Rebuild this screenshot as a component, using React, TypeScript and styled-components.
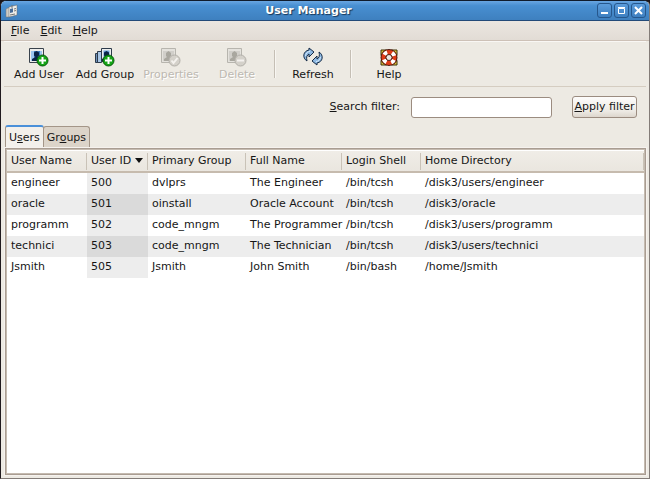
import React from "react";
import styled, { createGlobalStyle, css } from "styled-components";

const GlobalStyle = createGlobalStyle`
  * { box-sizing: border-box; }
  body { margin: 0; background: #1b1517; }
  body, button, input, table { font: 11px/14px "DejaVu Sans", sans-serif; color: #161616; }
  button { cursor: default; }
`;

const Window = styled.main`
  min-height: 100vh;
  display: flex;
  flex-direction: column;
  background: #edeae3;
  border: 1px solid #837c78;
  border-top-color: #101c2c;
  border-left-color: #201a1e;
  border-radius: 6px 6px 0 0;
  overflow: hidden;
`;

const TitleBar = styled.header`
  height: 20px;
  display: grid;
  grid-template-columns: 20px 1fr 54px;
  align-items: center;
  padding: 0 3px 0 4px;
  background: linear-gradient(#69a6e2, #488fd1 25%, #3e80bf);
  border-bottom: 1px solid #234a78;
`;

const Title = styled.h1`
  margin: 0;
  text-align: center;
  color: #fff;
  font-size: 11px;
  line-height: 18px;
  text-shadow: 1px 1px 1px #173655;
`;

const WindowButtons = styled.div`
  display: flex;
  gap: 2px;
  justify-content: flex-end;
`;

const WindowButton = styled.button`
  width: 15px;
  height: 15px;
  padding: 0;
  display: flex;
  border: 1px solid #26578c;
  border-radius: 3px;
  background: linear-gradient(#5b9cdb, #3d7fc0);
`;

const MenuBar = styled.nav`
  height: 20px;
  display: flex;
  align-items: center;
  padding: 0 6px;
  background: linear-gradient(#ebe6e0, #e2dcd5);
  border-bottom: 1px solid #cdc1b7;
`;

const MenuItem = styled.button`
  padding: 0 4px;
  margin-right: 3px;
  border: 0;
  background: none;
`;

const Key = styled.u`
  text-decoration-thickness: 1px;
  text-underline-offset: 1px;
`;

const Toolbar = styled.div`
  height: 46px;
  display: flex;
  align-items: center;
  margin: 0 3px;
  padding: 0 2px;
  border-top: 1px solid #f9f7f4;
  border-bottom: 1px solid #d5cdc1;
`;

const ToolButton = styled.button`
  width: 66px;
  padding: 0;
  display: flex;
  flex-direction: column;
  align-items: center;
  border: 0;
  background: none;
  white-space: nowrap;
  &:disabled { color: #bdb9b2; text-shadow: 1px 1px 0 #fff; }
`;

const Separator = styled.div`
  width: 2px;
  height: 28px;
  margin: 0 4px;
  border-left: 1px solid #c5bfb5;
  border-right: 1px solid #f8f6f2;
`;

const FilterRow = styled.form`
  display: flex;
  align-items: center;
  justify-content: flex-end;
  height: 38px;
  padding: 2px 12px 0;
`;

const SearchInput = styled.input`
  width: 141px;
  height: 21px;
  margin: 0 20px 0 11px;
  padding: 2px 4px;
  background: #fff;
  border: 1px solid #9b8c80;
  border-radius: 3px;
  outline: 0;
`;

const ApplyButton = styled.button`
  width: 65px;
  height: 22px;
  padding: 0;
  white-space: nowrap;
  border: 1px solid #9b8c80;
  border-radius: 3px;
  background: linear-gradient(#fdfcfb, #edeae4 70%, #ddd6cd);
`;

const Tabs = styled.div`
  display: flex;
  align-items: flex-end;
  padding: 0 4px;
`;

const Tab = styled.button<{ $active?: boolean }>`
  height: 22px;
  padding: 0 3px;
  border: 1px solid #a49688;
  border-bottom: 0;
  border-radius: 3px 3px 0 0;
  background: #dcd4c9;
  ${(p) =>
    p.$active
      ? css`
          height: 23px;
          background: #f3f0eb;
          border-top: 2px solid #4a90d9;
        `
      : css`
          margin-left: -1px;
        `}
`;

const Panel = styled.section`
  flex: 1;
  margin: 0 3px 3px 4px;
  border: 1px solid #a99d92;
  background: #fff;
  outline: 1px solid #f6f2ee;
  box-shadow: inset 0 0 0 1px #c5bbb0;
  padding: 2px 1px 1px;
`;

const Table = styled.table`
  width: 100%;
  table-layout: fixed;
  border-collapse: separate;
  border-spacing: 0;
`;

const Column = styled.col<{ $width?: number }>`
  width: ${(p) => (p.$width ? `${p.$width}px` : "auto")};
`;

const HeaderCell = styled.th`
  height: 22px;
  padding: 0 4px;
  text-align: left;
  font-weight: normal;
  white-space: nowrap;
  background:
    linear-gradient(#c9c2b7, #c9c2b7) right center / 1px 17px no-repeat,
    linear-gradient(#f0ede7, #eae6df);
  border-bottom: 2px solid #c6bbae;
`;

const Heading = styled.span`
  display: flex;
  align-items: center;
  gap: 4px;
`;

const Row = styled.tr`
  background: #fff;
  &:nth-child(even) { background: #ededed; }
`;

const Cell = styled.td<{ $sorted?: boolean }>`
  height: 21px;
  padding: 0 0 2px 4px;
  white-space: nowrap;
  ${(p) => p.$sorted && css`
    background: #ededed;
    ${Row}:nth-child(even) & { background: #dadada; }
  `}
`;

type Badge = "add" | "check" | "remove";

function Person({ x = 4, y = 2 }: { x?: number; y?: number }) {
  return (
    <g transform={`translate(${x} ${y})`}>
      <path d="M2.5 2.5 5 1l2.5 1.5v3L6 7l3.5 2v2H.5V9L4 7 2.5 5.5Z" fill="#0b2447" />
    </g>
  );
}

function AccountIcon({ badge, group }: { badge: Badge; group?: boolean }) {
  const off = badge !== "add";
  return (
    <svg width="22" height="22" viewBox="0 0 22 22" aria-hidden="true" opacity={off ? 0.8 : 1}>
      {group ? (
        <g stroke="#2d3b4b">
          <path d="M1.5 7.5h4v9h-4z" fill="#6f91b8" />
          <path d="M3.5 5.5h4v11h-4z" fill="#a8c6e6" />
          <path d="M7.5 2.5h10v13h-10z" fill="#eceeed" />
          <path d="M9.5 4.5h6v9h-6z" fill="#6aa2db" stroke="none" />
          <g stroke="none"><Person x={7.5} y={4} /></g>
        </g>
      ) : (
        <>
          <path d="M1.5 2.5h14v14h-14z" fill={off ? "#e3e1dc" : "#eeeeec"} stroke={off ? "#aaa8a2" : "#39424c"} />
          <path d="M3 5h11v10H3z" fill={off ? "#cbc9c4" : "#3e7dc0"} />
          {!off && <path d="M3 5h3v10H3zm9 0h2v10h-2z" fill="#9bc5ef" />}
          {off ? <path d="M6 7 8.5 5 11 7v3l-1 1 3 2v2H4v-2l3-2-1-1z" fill="#99978f" /> : <Person x={3.5} y={4} />}
        </>
      )}
      <circle cx="14.5" cy="14.5" r="5.5" fill={off ? "#cfccc5" : "#16a516"} stroke={off ? "#a5a29c" : "#075b0b"} />
      {badge === "add" && <path d="M14.5 11v7M11 14.5h7" stroke="#fff" strokeWidth="2" />}
      {badge === "remove" && <path d="M11 14.5h7" stroke="#f7f5f2" strokeWidth="2" />}
      {badge === "check" && <path d="m11.5 14.5 2 2.5 4-5" fill="none" stroke="#f7f5f2" strokeWidth="2" />}
    </svg>
  );
}

function RefreshIcon() {
  return (
    <svg width="22" height="22" viewBox="0 0 22 22" aria-hidden="true">
      <g fill="#8db8e2" stroke="#152b46" strokeLinejoin="round">
        <path d="M5 15C0 12 1 5 7 4V2l5 4-5 5V8C5 9 4 11 5 15Z" />
        <path d="M17 6c5 3 4 10-2 11v2l-5-4 5-5v3c2-1 3-3 2-7Z" />
      </g>
      <path d="M3.5 10C4 7.5 5 5.5 8 5.5M18.500 11c-.5 2.500-1.500 4.500-4.500 4.500" fill="none" stroke="#d5e9fa" />
    </svg>
  );
}

function HelpIcon() {
  return (
    <svg width="22" height="22" viewBox="0 0 22 22" aria-hidden="true">
      <path d="M3 4h5l3 1 3-1h5v5l-1 3 1 3v4h-5l-3-1-3 1H3v-4l1-3-1-3Z" fill="#e4c83b" stroke="#3c3209" />
      <circle cx="11" cy="11.5" r="5.5" fill="none" stroke="#4d170b" strokeWidth="6" />
      <circle cx="11" cy="11.5" r="5.5" fill="none" stroke="#df3c18" strokeWidth="4" />
      <circle cx="11" cy="11.5" r="5.5" fill="none" stroke="#fff" strokeWidth="4" strokeDasharray="3.6 5.04" strokeDashoffset="-2.5" />
      <circle cx="11" cy="11.5" r="3" fill="#edeae3" stroke="#5b2418" />
    </svg>
  );
}

function AppIcon() {
  return (
    <svg width="14" height="14" viewBox="0 0 14 14" aria-hidden="true">
      <path d="m1 5 4-2v10H1Z" fill="#cecdc7" stroke="#777" strokeWidth=".5" />
      <path d="m4 3 8-2v10l-8 2Z" fill="#eeeeea" stroke="#666" strokeWidth=".5" />
      <path d="m5 5 3-.7v4L5 9Z" fill="#476c98" />
      <path d="m9 5 2-.5M9 7l2-.5M5 11l5-1M7 1v3" stroke="#777" />
    </svg>
  );
}

function WindowGlyph({ d, thin }: { d: string; thin?: boolean }) {
  return (
    <svg width="13" height="13" viewBox="0 0 13 13" aria-hidden="true">
      <path d={d} fill="none" stroke="#fff" strokeWidth={thin ? 1 : 2} />
    </svg>
  );
}

const columns = [
  { name: "User Name", width: 80 },
  { name: "User ID", width: 61 },
  { name: "Primary Group", width: 98 },
  { name: "Full Name", width: 96 },
  { name: "Login Shell", width: 79 },
  { name: "Home Directory" },
];

const users = [
  ["engineer", "500", "dvlprs", "The Engineer", "/bin/tcsh", "/disk3/users/engineer"],
  ["oracle", "501", "oinstall", "Oracle Account", "/bin/tcsh", "/disk3/oracle"],
  ["programm", "502", "code_mngm", "The Programmer", "/bin/tcsh", "/disk3/users/programm"],
  ["technici", "503", "code_mngm", "The Technician", "/bin/tcsh", "/disk3/users/technici"],
  ["Jsmith", "505", "Jsmith", "John Smith", "/bin/bash", "/home/Jsmith"],
];

export default function App() {
  return (
    <>
      <GlobalStyle />
      <Window>
        <TitleBar>
          <AppIcon />
          <Title>User Manager</Title>
          <WindowButtons>
            <WindowButton aria-label="Minimize"><WindowGlyph d="M3 9h7" /></WindowButton>
            <WindowButton aria-label="Maximize"><WindowGlyph thin d="M3.5 4.5h6v5h-6zM3 3.5h7" /></WindowButton>
            <WindowButton aria-label="Close"><WindowGlyph d="m3 3 7 7m0-7-7 7" /></WindowButton>
          </WindowButtons>
        </TitleBar>
        <MenuBar>
          <MenuItem><Key>F</Key>ile</MenuItem>
          <MenuItem><Key>E</Key>dit</MenuItem>
          <MenuItem><Key>H</Key>elp</MenuItem>
        </MenuBar>
        <Toolbar>
          <ToolButton><AccountIcon badge="add" />Add User</ToolButton>
          <ToolButton><AccountIcon badge="add" group />Add Group</ToolButton>
          <ToolButton disabled><AccountIcon badge="check" />Properties</ToolButton>
          <ToolButton disabled><AccountIcon badge="remove" />Delete</ToolButton>
          <Separator />
          <ToolButton><RefreshIcon />Refresh</ToolButton>
          <Separator />
          <ToolButton><HelpIcon />Help</ToolButton>
        </Toolbar>
        <FilterRow onSubmit={(e) => e.preventDefault()}>
          <label htmlFor="search"><Key>S</Key>earch filter:</label>
          <SearchInput id="search" type="text" />
          <ApplyButton type="submit"><Key>A</Key>pply filter</ApplyButton>
        </FilterRow>
        <Tabs role="tablist">
          <Tab role="tab" aria-selected="true" $active>U<Key>s</Key>ers</Tab>
          <Tab role="tab" aria-selected="false">Gr<Key>o</Key>ups</Tab>
        </Tabs>
        <Panel>
          <Table>
            <colgroup>
              {columns.map((c) => <Column key={c.name} $width={c.width} />)}
            </colgroup>
            <thead>
              <tr>
                {columns.map((c, i) => (
                  <HeaderCell key={c.name} scope="col" aria-sort={i === 1 ? "ascending" : undefined}>
                    <Heading>
                      {c.name}
                      {i === 1 && (
                        <svg width="8" height="6" viewBox="0 0 8 6" aria-hidden="true"><path d="M0 0h8L4 5Z" fill="#111" /></svg>
                      )}
                    </Heading>
                  </HeaderCell>
                ))}
              </tr>
            </thead>
            <tbody>
              {users.map((user) => (
                <Row key={user[0]}>
                  {user.map((value, i) => <Cell key={i} $sorted={i === 1}>{value}</Cell>)}
                </Row>
              ))}
            </tbody>
          </Table>
        </Panel>
      </Window>
    </>
  );
}
